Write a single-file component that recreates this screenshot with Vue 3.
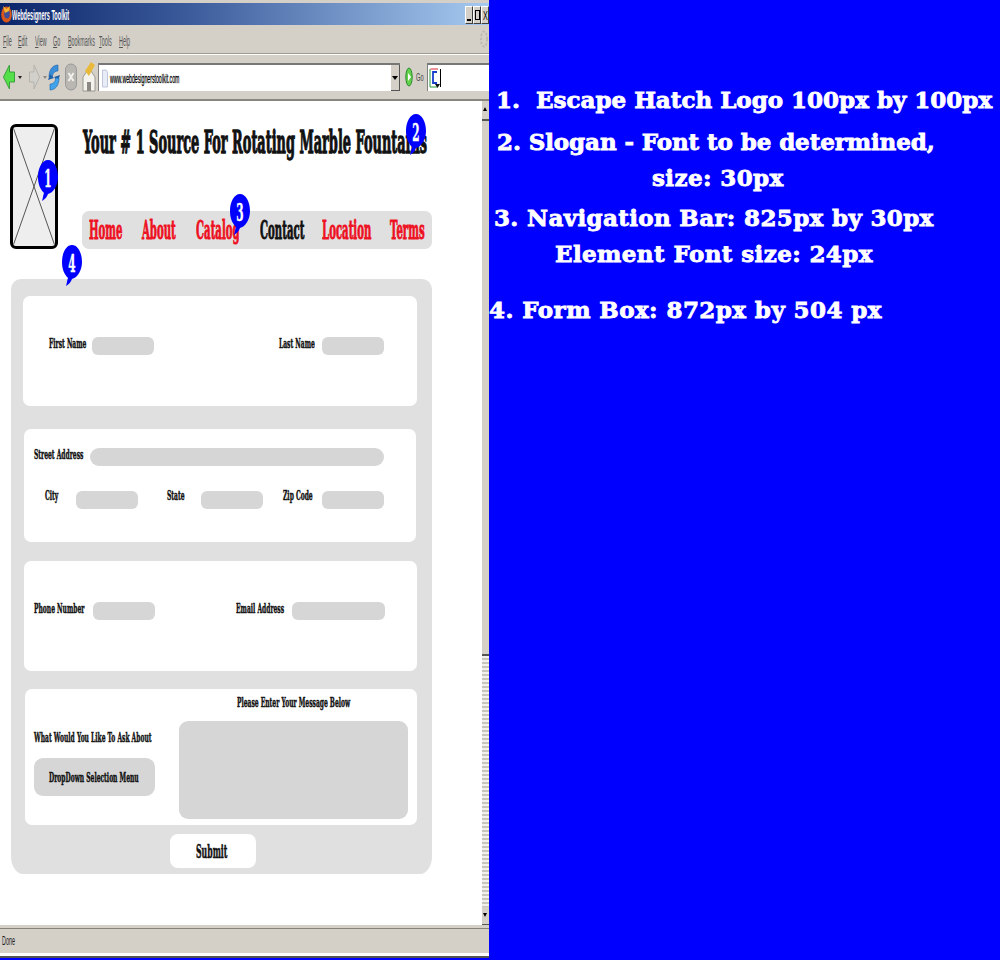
<script setup>
const menus = [
  { t: 'File', w: 15 },
  { t: 'Edit', w: 17 },
  { t: 'View', w: 18 },
  { t: 'Go', w: 15 },
  { t: 'Bookmarks', w: 31 },
  { t: 'Tools', w: 20 },
  { t: 'Help', w: 12 },
]
const navItems = [
  { label: 'Home', on: false },
  { label: 'About', on: false },
  { label: 'Catalog', on: false },
  { label: 'Contact', on: true },
  { label: 'Location', on: false },
  { label: 'Terms', on: false },
]
const bubbles = [
  { n: 1, cls: 'b1' },
  { n: 2, cls: 'b2' },
  { n: 3, cls: 'b3' },
  { n: 4, cls: 'b4' },
]
</script>

<template>
  <div class="screen">
    <div class="browser">
      <div class="titlebar">
        <svg class="fox" width="11" height="18" viewBox="0 0 11 18">
          <ellipse cx="5.500" cy="9.500" rx="5.300" ry="8" fill="#d9561a" />
          <ellipse cx="6" cy="9" rx="2.800" ry="4.500" fill="#3d4f9b" />
          <path d="M2 1 L5.500 4 L9 1 L8 6 L4 8 Z" fill="#f2b632" />
        </svg>
        <span class="title">Webdesigners Toolkit</span>
        <div class="winbtns">
          <span class="winbtn"><i class="min"></i></span>
          <span class="winbtn"><i class="max"></i></span>
          <span class="winbtn"><span class="xglyph">X</span></span>
        </div>
      </div>
      <div class="menubar">
        <span v-for="m in menus" :key="m.t" class="menubox" :style="{ width: m.w + 'px' }">
          <span class="menu">{{ m.t }}</span>
        </span>
        <svg class="throbber" width="8" height="20" viewBox="0 0 8 20">
          <ellipse cx="4" cy="10" rx="3" ry="7.500" fill="none" stroke="#bdb9b0" stroke-width="1.800" stroke-dasharray="2.500 1.500" />
        </svg>
      </div>
      <div class="toolbar">
        <svg class="t-back" width="12" height="28" viewBox="0 0 12 28">
          <path d="M11.500 9 H6.500 V2 L.5 14 L6.500 26 V19 H11.500 Z" fill="#55e04a" stroke="#3aa03a" stroke-width="1" />
        </svg>
        <i class="drop t-d1"></i>
        <svg class="t-fwd" width="11" height="28" viewBox="0 0 11 28">
          <path d="M.5 9 H5 V2 L10.500 14 L5 26 V19 H.5 Z" fill="#d2d0cb" stroke="#b5b3ad" stroke-width="1" />
        </svg>
        <i class="drop pale t-d2"></i>
        <svg class="t-reload" width="12" height="29" viewBox="0 0 12 29">
          <path d="M1 14 C1 6 5 2 10 2 L10 8 C7 8 4.500 10 4.500 14 Z" fill="#3b8fd9" stroke="#1e62a8" stroke-width=".6" />
          <path d="M6 14 L12 12 L10 18 Z" fill="#1e62a8" />
          <path d="M11 15 C11 23 7 27 2 27 L2 21 C5 21 7.500 19 7.500 15 Z" fill="#3fa2ea" stroke="#1e62a8" stroke-width=".6" />
          <path d="M6 15 L0 17 L2 11 Z" fill="#1e62a8" />
        </svg>
        <svg class="t-stop" width="12" height="28" viewBox="0 0 12 28">
          <rect x=".5" y="1" width="11" height="26" rx="5.500" fill="#b9b7b2" stroke="#999" />
          <path d="M3.500 10 L8.500 18 M8.500 10 L3.500 18" stroke="#f1f0ec" stroke-width="2" />
        </svg>
        <svg class="t-home" width="14" height="30" viewBox="0 0 14 30">
          <path d="M1 15 L7 6 L13 15 V29 H1 Z" fill="#f4f2ec" stroke="#8a8780" stroke-width=".8" />
          <rect x="5" y="20" width="4" height="9" fill="#8c8780" />
          <path d="M3 9 L9 0 L13 3 L7 14 Z" fill="#e9b93a" />
        </svg>
        <div class="urlbox">
          <svg width="6" height="19" viewBox="0 0 6 19">
            <path d="M.5 1 H4 L5.500 3 V18 H.5 Z" fill="#e8ecf6" stroke="#a9b3cc" stroke-width=".7" />
          </svg>
          <span class="url">www.webdesignerstoolkit.com</span>
          <span class="urldrop"><i></i></span>
        </div>
        <svg class="go" width="8" height="20" viewBox="0 0 8 20">
          <ellipse cx="4" cy="10" rx="3.200" ry="9" fill="#62d24a" stroke="#2f8a2f" />
          <path d="M3 6 L6 10 L3 14 Z" fill="#fff" />
        </svg>
        <span class="golabel">Go</span>
        <div class="search">
          <svg width="11" height="20" viewBox="0 0 11 20">
            <path d="M1.500 1 H9" stroke="#d23" stroke-width="1" fill="none" />
            <path d="M1 1 V19 H8" stroke="#2a9a3a" stroke-width="1" fill="none" />
            <path d="M8 4 H4 V15 H8" stroke="#1a3fc8" stroke-width="1.800" fill="none" />
            <path d="M6 16 H11 L8.500 20 Z" fill="#111" />
          </svg>
          <i class="caret"></i>
        </div>
      </div>
      <div class="viewport">
        <main class="page">
          <div class="head">
            <div class="logo">
              <svg width="100%" height="100%" viewBox="0 0 100 100" preserveAspectRatio="none">
                <path d="M0 0 L100 100 M100 0 L0 100" stroke="#555" stroke-width="1" vector-effect="non-scaling-stroke" />
              </svg>
            </div>
            <div class="headmain">
              <h1 class="slogan"><span>Your # 1 Source For Rotating Marble Fountains</span></h1>
              <nav class="nav">
                <a v-for="n in navItems" :key="n.label" :class="{ on: n.on }"><span>{{ n.label }}</span></a>
              </nav>
            </div>
          </div>
          <form class="formbox" @submit.prevent>
            <section class="card c1">
              <label class="lbl l43"><span>First Name</span></label>
              <i class="field w62"></i>
              <label class="lbl l43 gapl"><span>Last Name</span></label>
              <i class="field w62"></i>
            </section>
            <section class="card c2">
              <div class="row addr">
                <label class="lbl l56"><span>Street Address</span></label>
                <i class="field long"></i>
              </div>
              <div class="row city">
                <label class="lbl l31"><span>City</span></label>
                <i class="field w62 tall"></i>
                <label class="lbl l34 gs"><span>State</span></label>
                <i class="field w62 tall"></i>
                <label class="lbl l39 gz"><span>Zip Code</span></label>
                <i class="field w62 tall"></i>
              </div>
            </section>
            <section class="card c3">
              <label class="lbl l59"><span>Phone Number</span></label>
              <i class="field w62"></i>
              <label class="lbl l56 gapm"><span>Email Address</span></label>
              <i class="field w92"></i>
            </section>
            <section class="card c4">
              <div class="ask">
                <label class="lbl"><span>What Would You Like To Ask About</span></label>
                <div class="select"><span>DropDown Selection Menu</span></div>
              </div>
              <div class="msg">
                <label class="lbl"><span>Please Enter Your Message Below</span></label>
                <div class="area"></div>
              </div>
            </section>
            <button class="submit" type="submit"><span>Submit</span></button>
          </form>
        </main>
        <div class="scroll">
          <span class="sbtn up"></span>
          <span class="thumb"></span>
          <span class="track"></span>
          <span class="sbtn down"></span>
        </div>
        <div v-for="b in bubbles" :key="b.n" class="bubble" :class="b.cls">
          <svg width="20" height="42" viewBox="0 0 20 42">
            <path d="M10 0 C16 0 20 8 20 17 C20 26 15 33 10 34 C9 37 7 39 4 41 C5 38 5 35 6 33 C2 29 0 24 0 17 C0 8 4 0 10 0 Z" fill="#0000ff" />
          </svg>
          <b>{{ b.n }}</b>
        </div>
      </div>
      <div class="statusbar"><span>Done</span></div>
    </div>
    <aside class="notes">
      <p class="n1">1.&nbsp; Escape Hatch Logo 100px by 100px</p>
      <p class="n2">2. Slogan - Font to be determined,</p>
      <p class="n2b">size: 30px</p>
      <p class="n3">3. Navigation Bar: 825px by 30px</p>
      <p class="n3b">Element Font size: 24px</p>
      <p class="n4">4. Form Box: 872px by 504 px</p>
    </aside>
  </div>
</template>

<style>
html, body { margin: 0; background: #0000ff; }
</style>

<style scoped>
.screen {
  width: 1000px;
  height: 960px;
  display: flex;
  background: #0000ff;
  overflow: hidden;
  font-family: "DejaVu Serif", "Liberation Serif", serif;
}
.browser {
  width: 489px;
  flex: none;
  display: flex;
  flex-direction: column;
  background: #d4d0c8;
  height: 958px;
  border-bottom: 2px solid #555;
  padding-top: 3px;
  box-sizing: border-box;
}
.titlebar {
  height: 22px;
  flex: none;
  display: flex;
  align-items: center;
  padding-left: 1px;
  background: linear-gradient(90deg, #0a246a, #3a5a9a 38%, #a6caf0);
}
.fox { flex: none; }
.title {
  color: #fff;
  font: 700 15px "Liberation Sans", sans-serif;
  width: 60px;
  white-space: nowrap;
  display: inline-block;
  transform: scaleX(.37);
  transform-origin: left center;
}
.winbtns { margin-left: auto; display: flex; height: 18px; margin-top: 2px; }
.winbtn {
  width: 8px;
  height: 18px;
  box-sizing: border-box;
  background: #d4d0c8;
  border: 1px solid #fff;
  border-right-color: #404040;
  border-bottom-color: #404040;
  display: flex;
  align-items: center;
  justify-content: center;
  position: relative;
  color: #000;
}
.xglyph { font: 400 13px "Liberation Sans", sans-serif; transform: scaleX(.55); display: inline-block; }
.min { position: absolute; left: 1px; bottom: 2px; width: 4px; height: 2px; background: #000; }
.max { position: absolute; left: 1px; top: 3px; width: 5px; height: 10px; border: 1px solid #000; box-sizing: border-box; }
.menubar {
  height: 29px;
  flex: none;
  display: flex;
  align-items: center;
  padding: 3px 0 0 3px;
  box-sizing: border-box;
  border-bottom: 1px solid #9d9a92;
  position: relative;
}
.menubox { display: block; flex: none; }
.menu {
  display: inline-block;
  font: 400 15px "Liberation Sans", sans-serif;
  color: #555;
  transform: scaleX(.36);
  transform-origin: left center;
}
.menu::first-letter { text-decoration: underline; }
.throbber { position: absolute; right: 1px; top: 4px; }
.toolbar {
  height: 47px;
  flex: none;
  box-sizing: border-box;
  display: flex;
  align-items: center;
  padding: 0 0 0 3px;
  border-top: 1px solid #fff;
  border-bottom: 2px solid #8a877f;
}
.toolbar > * { flex: none; }
.drop { width: 0; height: 0; border: 2px solid transparent; border-top: 3px solid #222; margin-top: 3px; }
.drop.pale { border-top-color: #888; }
.t-d1 { margin-left: 3px; }
.t-fwd { margin-left: 7px; }
.t-d2 { margin-left: 3px; }
.t-reload { margin-left: 1px; }
.t-stop { margin-left: 5px; }
.t-home { margin-left: 5px; }
.urlbox {
  width: 302px;
  height: 28px;
  box-sizing: border-box;
  background: #fff;
  border-top: 2px solid #777;
  border-left: 1px solid #808080;
  display: flex;
  align-items: center;
  padding-left: 3px;
  margin-left: 2px;
  overflow: hidden;
}
.urlbox svg { flex: none; }
.url {
  font: 400 13px "Liberation Sans", sans-serif;
  color: #000;
  width: 0;
  margin-left: 2px;
  transform: scaleX(.4);
  transform-origin: left center;
  white-space: nowrap;
  -webkit-text-stroke: .3px #000;
}
.urldrop {
  margin-left: auto;
  width: 9px;
  height: 26px;
  flex: none;
  background: #d4d0c8;
  border-right: 1px solid #555;
  border-bottom: 1px solid #555;
  box-sizing: border-box;
  display: flex;
  align-items: center;
  justify-content: center;
}
.urldrop i { width: 0; height: 0; border: 3px solid transparent; border-top: 4px solid #000; margin-top: 3px; }
.go { margin-left: 5px; }
.golabel {
  font: 400 11px "Liberation Sans", sans-serif;
  color: #444;
  width: 7px;
  margin-left: 3px;
  display: inline-block;
  white-space: nowrap;
  transform: scaleX(.52);
  transform-origin: left center;
}
.search {
  margin-left: 4px;
  width: 62px;
  height: 28px;
  background: #fff;
  border-top: 2px solid #777;
  border-left: 1px solid #808080;
  box-sizing: border-box;
  display: flex;
  align-items: center;
  padding-left: 1px;
}
.caret { width: 1px; height: 18px; background: #000; }
.viewport {
  flex: 1;
  min-height: 0;
  display: flex;
  background: #fff;
  position: relative;
}
.page {
  flex: 1;
  min-width: 0;
  padding: 24px 0 0 11px;
  box-sizing: border-box;
}
.head { display: flex; height: 154px; }
.logo {
  width: 48px;
  height: 125px;
  box-sizing: border-box;
  background: #eeeeee;
  border: 3px solid #000;
  border-radius: 6px;
  flex: none;
  margin-top: -1px;
  margin-left: -1px;
  overflow: hidden;
}
.logo svg { display: block; }
.headmain { width: 350px; margin-left: 24px; }
.slogan {
  margin: 0;
  height: 86px;
  font-size: 32px;
  font-weight: 700;
  line-height: 34px;
  color: #111;
  white-space: nowrap;
}
.slogan span {
  display: inline-block;
  margin-left: 1px;
  transform: scaleX(.403);
  transform-origin: left center;
  -webkit-text-stroke: 1.300px #111;
}
.nav {
  height: 38px;
  background: #e0e0e0;
  border-radius: 7px;
  display: grid;
  grid-template-columns: 53px 54px 64px 62px 68px 1fr;
  align-items: center;
  padding-left: 7px;
  box-sizing: border-box;
}
.nav a {
  font-size: 26px;
  font-weight: 700;
  line-height: 38px;
  color: #ee1122;
  white-space: nowrap;
  display: block;
  width: 0;
}
.nav a span {
  display: inline-block;
  transform: scaleX(.39);
  transform-origin: left center;
  -webkit-text-stroke: 1px currentColor;
}
.nav a.on { color: #111; }
.formbox {
  width: 421px;
  height: 595px;
  box-sizing: border-box;
  background: #e0e0e0;
  border-radius: 10px 10px 12px 12px / 10px 10px 18px 18px;
  padding: 17px 15px 0 12px;
  display: flex;
  flex-direction: column;
}
.card {
  background: #fff;
  border-radius: 7px;
  box-sizing: border-box;
  flex: none;
}
.lbl {
  font-size: 13px;
  font-weight: 700;
  line-height: 14px;
  color: #111;
  white-space: nowrap;
  display: block;
  flex: none;
}
.lbl span, .select span {
  display: inline-block;
  transform: scaleX(.46);
  transform-origin: left center;
  -webkit-text-stroke: .5px #111;
}
.l31 { width: 31px; }
.l34 { width: 34px; }
.l39 { width: 39px; }
.l43 { width: 43px; }
.l56 { width: 56px; }
.l59 { width: 59px; }
.field {
  display: block;
  height: 18px;
  background: #d6d6d6;
  border-radius: 6px;
  flex: none;
}
.field.tall { margin-top: 2px; }
.w62 { width: 62px; }
.w92 { width: 93px; }
.c1 {
  height: 110px;
  display: flex;
  align-items: flex-start;
  padding: 41px 0 0 26px;
}
.gapl { margin-left: 125px; }
.c2 {
  height: 113px;
  margin: 23px 1px 0;
  padding: 19px 0 0 10px;
}
.row { display: flex; align-items: flex-start; }
.long { width: 294px; border-radius: 9px; }
.city { margin-top: 23px; padding-left: 11px; }
.gs { margin-left: 29px; }
.gz { margin-left: 20px; }
.c3 {
  height: 110px;
  margin: 19px 0 0 1px;
  display: flex;
  padding: 41px 0 0 10px;
}
.gapm { margin-left: 81px; }
.c4 {
  height: 136px;
  margin: 18px 0 0 2px;
  display: flex;
  padding: 0 9px 6px;
}
.ask { width: 145px; padding-top: 42px; flex: none; }
.select {
  margin-top: 13px;
  width: 121px;
  height: 38px;
  background: #d6d6d6;
  border-radius: 9px;
  font-size: 13px;
  font-weight: 700;
  color: #111;
  display: flex;
  align-items: center;
  white-space: nowrap;
  padding-left: 15px;
  box-sizing: border-box;
}
.msg { flex: 1; min-width: 0; padding-top: 7px; }
.msg .lbl { padding-left: 58px; height: 25px; }
.area { height: 98px; background: #d6d6d6; border-radius: 9px; }
.submit {
  width: 86px;
  height: 34px;
  margin: 9px 0 0 147px;
  padding: 0 0 0 26px;
  border: 0;
  border-radius: 8px;
  background: #fff;
  font-family: inherit;
  font-size: 18px;
  font-weight: 700;
  color: #111;
  text-align: left;
  white-space: nowrap;
  overflow: hidden;
}
.submit span {
  display: inline-block;
  transform: scaleX(.43);
  transform-origin: left center;
  -webkit-text-stroke: .6px #111;
}
.scroll {
  width: 7px;
  flex: none;
  display: flex;
  flex-direction: column;
  background: #d4d0c8;
}
.sbtn {
  height: 20px;
  flex: none;
  box-sizing: border-box;
  background: #d4d0c8;
  position: relative;
}
.sbtn.up { border-bottom: 2px solid #555; }
.sbtn.down { border-bottom: 1px solid #555; height: 18px; }
.sbtn.up::after {
  content: "";
  position: absolute;
  left: 1px;
  top: 6px;
  border: 2px solid transparent;
  border-bottom: 4px solid #000;
  border-top: 0;
}
.sbtn.down::after {
  content: "";
  position: absolute;
  left: 1px;
  top: 6px;
  border: 2px solid transparent;
  border-top: 4px solid #000;
  border-bottom: 0;
}
.thumb { height: 533px; flex: none; background: #d4d0c8; border-bottom: 2px solid #555; }
.track {
  flex: 1;
  background: repeating-linear-gradient(180deg, #f2f0ec 0 2px, #c8c5bc 2px 4px);
}
.bubble {
  position: absolute;
  width: 20px;
  height: 42px;
}
.bubble svg { display: block; }
.bubble b {
  position: absolute;
  left: 0;
  right: 0;
  top: 6px;
  text-align: center;
  color: #fff;
  font-size: 25px;
  line-height: 25px;
  transform: scaleX(.42);
  -webkit-text-stroke: .5px #fff;
}
.b1 { left: 38px; top: 59px; }
.b2 { left: 406px; top: 13px; }
.b3 { left: 230px; top: 93px; }
.b4 { left: 62px; top: 144px; }
.statusbar {
  height: 31px;
  flex: none;
  box-sizing: border-box;
  border-top: 3px solid #d4d0c8;
  border-bottom: 3px solid #fff;
  box-shadow: inset 0 1px 0 #85827a;
  display: flex;
  align-items: center;
  padding-left: 2px;
  font: 400 13px "Liberation Sans", sans-serif;
  color: #222;
}
.statusbar span { transform: scaleX(.42); transform-origin: left center; }
.notes {
  flex: 1;
  color: #fff;
  padding-top: 82px;
  font-weight: 700;
  font-size: 23px;
  line-height: 36px;
  white-space: nowrap;
  -webkit-text-stroke: .8px #fff;
}
.notes p { margin: 0; }
.n1 { padding-left: 7px; }
.n2 { padding-left: 8px; margin-top: 6px !important; letter-spacing: -.1px; }
.n2b { padding-left: 163px; letter-spacing: .4px; }
.n3 { padding-left: 5px; margin-top: 4px !important; letter-spacing: .35px; }
.n3b { padding-left: 66px; letter-spacing: .4px; }
.n4 { margin-top: 20px !important; letter-spacing: .43px; }
</style>
